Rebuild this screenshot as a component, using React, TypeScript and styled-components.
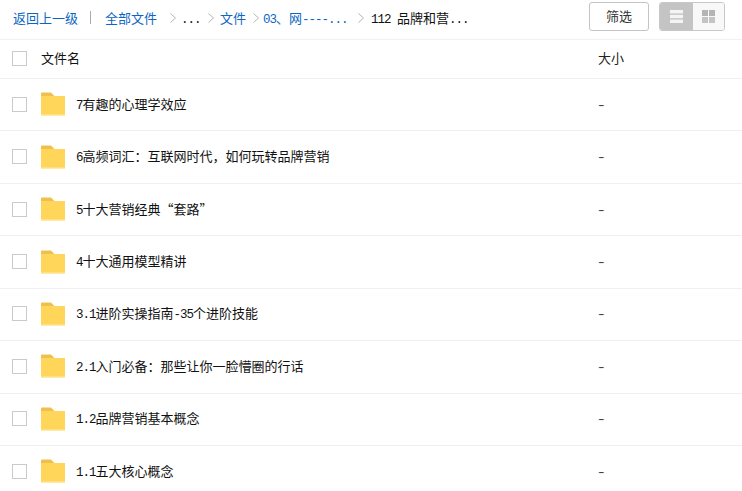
import React from "react";
import styled, { createGlobalStyle } from "styled-components";

const Global = createGlobalStyle`
  html, body { margin: 0; padding: 0; background: #fff; overflow: hidden; }
  body { font-family: "Noto Sans CJK SC", "Liberation Mono", monospace; font-size: 13px; color: #111; }
`;
const Page = styled.div`
  width: 742px;
  height: 491px;
  overflow: hidden;
`;
const Toolbar = styled.div`
  height: 39px;
  box-sizing: content-box;
  border-bottom: 1px solid #f1f1f1;
  display: flex;
  align-items: flex-start;
  padding-left: 13px;
`;
const Crumbs = styled.div`
  display: flex;
  align-items: center;
  flex: 1;
  height: 35px;
`;
const CrumbLink = styled.span<{ $w: number }>`
  color: #0b66c3;
  width: ${(p) => p.$w}px;
  white-space: nowrap;
`;
const CrumbText = styled.span<{ $w: number }>`
  color: #111;
  width: ${(p) => p.$w}px;
  white-space: nowrap;
`;
const Divider = styled.span`
  width: 1px;
  height: 13px;
  background: #aaa;
  margin: 0 14px 0 13px;
`;
const ChevronBox = styled.span<{ $l: number; $r: number }>`
  display: flex;
  margin: 0 ${(p) => p.$r}px 0 ${(p) => p.$l}px;
`;
const Latin = styled.span`
  font-family: "Liberation Mono", monospace;
  font-size: 12.5px;
  letter-spacing: -1px;
`;
const FilterButton = styled.button`
  width: 60px;
  height: 29px;
  margin: 2px 10px 0 0;
  box-sizing: border-box;
  border: 1px solid #c4c4c4;
  border-radius: 3px;
  background: #fff;
  color: #333;
  font: inherit;
  padding: 0 0 2px;
`;
const ViewSwitch = styled.div`
  display: flex;
  width: 66px;
  height: 29px;
  margin: 2px 17px 0 0;
  box-sizing: border-box;
  border: 1px solid #c8c8c8;
  border-radius: 3px;
  overflow: hidden;
`;
const ViewButton = styled.div<{ $active?: boolean }>`
  display: flex;
  align-items: center;
  justify-content: center;
  width: ${(p) => (p.$active ? 33 : 32)}px;
  background: ${(p) => (p.$active ? "#c4c4c4" : "#f8f8f8")};
`;
const HeaderRow = styled.div`
  height: 37px;
  border-bottom: 1px solid #f0f0f0;
  display: flex;
  align-items: center;
  padding: 0 0 1px 12px;
  box-sizing: content-box;
`;
const FileRow = styled.div`
  height: 52.45px;
  border-bottom: 1px solid #f0f0f0;
  display: flex;
  align-items: center;
  padding: 0 0 1px 12px;
  box-sizing: border-box;
`;
const Check = styled.span`
  width: 15px;
  height: 15px;
  box-sizing: border-box;
  border: 1px solid #cacaca;
  flex: none;
`;
const HeaderName = styled.span`
  margin: 0 0 2px 14px;
  width: 557px;
  color: #111;
`;
const FileName = styled.span`
  margin: 0 0 2px 11px;
  width: 522px;
  white-space: nowrap;
  color: #111;
`;
const SizeHead = styled.span`
  margin-bottom: 2px;
  color: #222;
`;
const SizeDash = styled.span`
  font-family: "Liberation Sans", sans-serif;
  font-size: 13px;
  color: #444;
  display: inline-block;
  transform: scaleX(1.5);
  transform-origin: left center;
`;
const FolderSvg = styled.svg`
  margin-left: 14px;
  flex: none;
`;

const Chevron = () => (
  <svg width="6" height="10" viewBox="0 0 6 10" fill="none">
    <path d="M.5 .5 5.5 5 .5 9.5" stroke="#b5b5b5" strokeWidth="1" />
  </svg>
);
const Folder = () => (
  <FolderSvg width="24" height="24" viewBox="0 0 24 24">
    <path d="M0 1.5A1 1 0 0 1 1 .5h9l3 3v4H0z" fill="#efc04f" />
    <rect x="0" y="4" width="24" height="19.5" fill="#ffd659" />
    <rect x="0" y="22.5" width="24" height="1" fill="#ffe9a6" />
  </FolderSvg>
);
const ListIcon = () => (
  <svg width="13" height="13" viewBox="0 0 13 13">
    <rect x="0" y="0" width="13" height="3.4" fill="#f4f4f4" />
    <rect x="0" y="4.8" width="13" height="3.4" fill="#f4f4f4" />
    <rect x="0" y="9.6" width="13" height="3.4" fill="#f4f4f4" />
  </svg>
);
const GridIcon = () => (
  <svg width="13" height="13" viewBox="0 0 13 13">
    <rect x="0" y="0" width="6" height="6" fill="#b4b4b4" />
    <rect x="7" y="0" width="6" height="6" fill="#b4b4b4" />
    <rect x="0" y="7" width="6" height="6" fill="#c4c4c4" />
    <rect x="7" y="7" width="6" height="6" fill="#c4c4c4" />
  </svg>
);

/* Latin runs are half the CJK em wide, as in the reference's font. */
const Mixed = ({ text }: { text: string }) => (
  <>
    {text.split(/([\x20-\x7e]+)/).map((part, i) =>
      i % 2 ? <Latin key={i}>{part}</Latin> : part
    )}
  </>
);

const files = [
  "7有趣的心理学效应",
  "6高频词汇:互联网时代,如何玩转品牌营销",
  "5十大营销经典“套路”",
  "4十大通用模型精讲",
  "3.1进阶实操指南-35个进阶技能",
  "2.1入门必备:那些让你一脸懵圈的行话",
  "1.2品牌营销基本概念",
  "1.1五大核心概念",
].map((s) => s.replace(/:/g, "\uFF1A").replace(/,/g, "\uFF0C"));

export default function App() {
  return (
    <Page>
      <Global />
      <Toolbar>
        <Crumbs>
          <CrumbLink $w={64}>返回上一级</CrumbLink>
          <Divider />
          <CrumbLink $w={52}>全部文件</CrumbLink>
          <ChevronBox $l={13} $r={5}><Chevron /></ChevronBox>
          <CrumbText $w={19}><Mixed text="..." /></CrumbText>
          <ChevronBox $l={8} $r={6}><Chevron /></ChevronBox>
          <CrumbLink $w={26}>文件</CrumbLink>
          <ChevronBox $l={7} $r={4}><Chevron /></ChevronBox>
          <CrumbLink $w={87}><Mixed text="03" />、网<Mixed text="----..." /></CrumbLink>
          <ChevronBox $l={8} $r={7}><Chevron /></ChevronBox>
          <CrumbText $w={100}><Mixed text="112 " />品牌和营<Mixed text="..." /></CrumbText>
        </Crumbs>
        <FilterButton>筛选</FilterButton>
        <ViewSwitch>
          <ViewButton $active><ListIcon /></ViewButton>
          <ViewButton><GridIcon /></ViewButton>
        </ViewSwitch>
      </Toolbar>
      <HeaderRow>
        <Check />
        <HeaderName>文件名</HeaderName>
        <SizeHead>大小</SizeHead>
      </HeaderRow>
      {files.map((f) => (
        <FileRow key={f}>
          <Check />
          <Folder />
          <FileName><Mixed text={f} /></FileName>
          <SizeDash>-</SizeDash>
        </FileRow>
      ))}
    </Page>
  );
}
